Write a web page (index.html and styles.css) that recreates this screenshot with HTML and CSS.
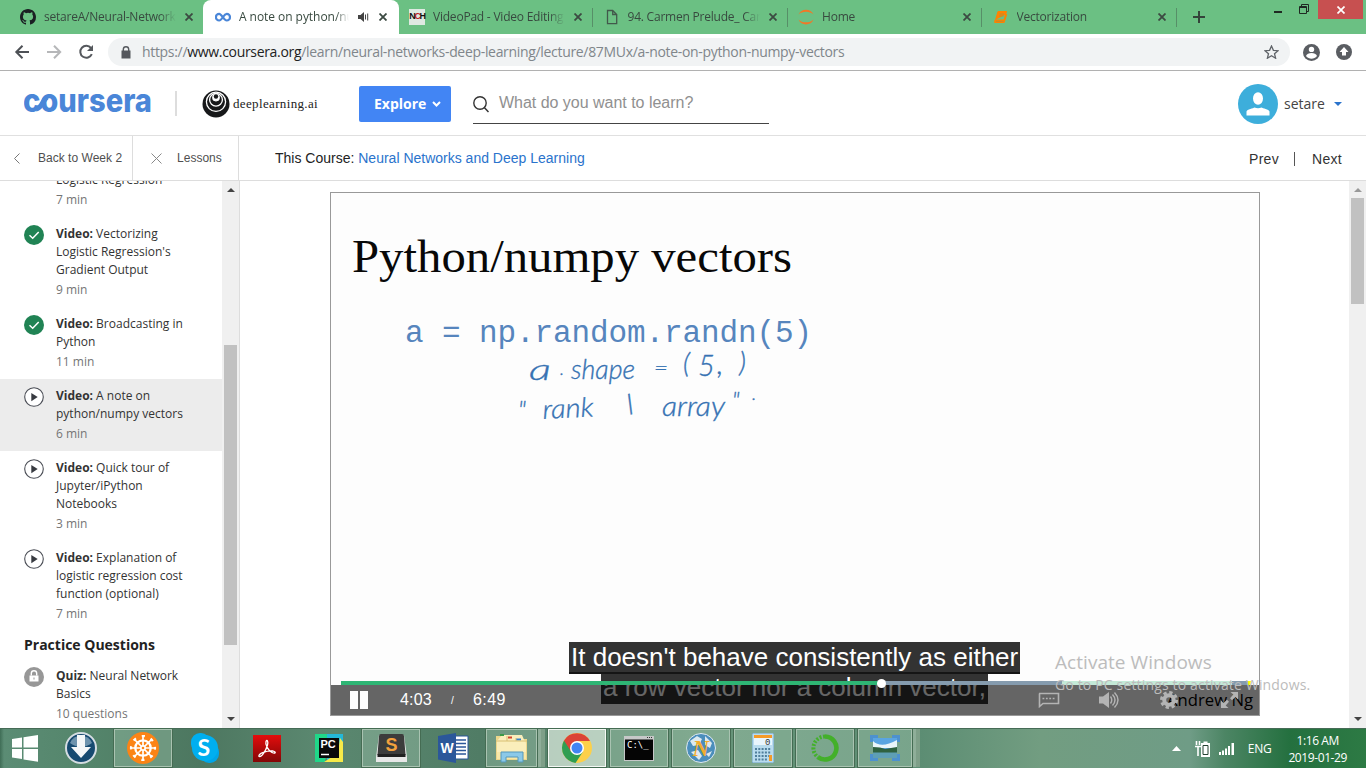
FILE: index.html
```html
<!DOCTYPE html>
<html lang="en">
<head>
<meta charset="utf-8">
<title>A note on python/numpy vectors</title>
<link rel="stylesheet" href="styles.css">
</head>
<body>
<svg width="0" height="0" class="defs">
  <symbol id="x" viewBox="0 0 8 8"><path d="M.5.5l7 7M7.500.5l-7 7" stroke="#3c4a42" stroke-width="1.8"/></symbol>
  <symbol id="play" viewBox="0 0 20 20"><circle cx="10" cy="10" r="9.300" fill="#fff" stroke="#4a4d55" stroke-width="1.1"/><path d="M7.300 6v8.200l6.400-4.100z" fill="#373a40"/></symbol>
  <symbol id="check" viewBox="0 0 20 20"><circle cx="10" cy="10" r="10" fill="#208354"/><path d="M5.500 10.300l3.200 3 6-6.300" fill="none" stroke="#fff" stroke-width="1.500"/></symbol>
</svg>
<header class="tabs">
  <div class="tab first"><svg class="fav" viewBox="0 0 16 16"><path fill="#1b1f23" d="M8 0C3.580 0 0 3.580 0 8c0 3.540 2.290 6.530 5.470 7.590.4.070.55-.17.55-.38v-1.490c-2.230.48-2.690-.95-2.690-.95-.36-.92-.89-1.170-.89-1.170-.73-.5.05-.49.05-.49.8.060 1.230.83 1.230.83.710 1.230 1.870.87 2.330.67.070-.52.28-.87.51-1.070-1.780-.2-3.650-.89-3.650-3.950 0-.87.310-1.590.82-2.150-.08-.2-.36-1.020.08-2.120 0 0 .67-.22 2.200.82a7.600 7.600 0 0 1 4 0c1.530-1.040 2.200-.82 2.200-.82.44 1.100.16 1.920.08 2.120.51.560.82 1.270.82 2.150 0 3.070-1.870 3.750-3.650 3.950.29.25.54.730.54 1.480v2.200c0 .21.150.46.550.38A8 8 0 0 0 16 8c0-4.420-3.580-8-8-8z"/></svg><span class="ttl">setareA/Neural-Networks</span><svg class="x"><use href="#x"/></svg></div>
  <div class="tab active"><svg class="fav" viewBox="0 0 16 16"><path d="M8 8C6.200 10.700 5.300 11.500 4.200 11.500a3.300 3.300 0 1 1 0-6.600c2.500 0 4.500 6.600 7.500 6.600a3.300 3.300 0 1 0 0-6.600C10.200 4.900 9.300 6 8 8" fill="none" stroke="#4a86d8" stroke-width="2.200"/></svg><span class="ttl">A note on python/numpy</span><svg class="spk" viewBox="0 0 11 10"><path d="M0 3h2.500L6 0v10L2.500 7H0z" fill="#444"/><path d="M7.500 2.500v5M9.700 1.500v7" stroke="#444"/></svg><svg class="x"><use href="#x"/></svg></div>
  <div class="tab"><span class="fav nch">N<em>C</em>H</span><span class="ttl">VideoPad - Video Editing</span><svg class="x"><use href="#x"/></svg></div>
  <div class="tab line"><svg class="fav" viewBox="0 0 16 16"><path d="M3.500 1.500h5.200l4 4v9.200H3.500zM8.700 1.500v4h4" fill="none" stroke="#42584b" stroke-width="1.300"/></svg><span class="ttl">94. Carmen Prelude_ Carmen</span><svg class="x"><use href="#x"/></svg></div>
  <div class="tab line"><svg class="fav" viewBox="0 0 16 16"><path d="M.5 5.500C3-1 13-1 15.500 5.500 12 1.700 4 1.700.5 5.500zM.5 10.500C3 17 13 17 15.500 10.500 12 14.300 4 14.300.5 10.500z" fill="#f37726"/></svg><span class="ttl">Home</span><svg class="x"><use href="#x"/></svg></div>
  <div class="tab line"><svg class="fav" viewBox="0 0 16 16"><path d="M5 2.500h8.500l-2.500 8.500H2.500zM2 11l-.3 2.500h9.500L13.800 5" fill="#ff8200" stroke="#ff8200" stroke-width="1"/><path d="M6.500 5h4.500M6 7h4.500M3 12.300h7.500" stroke="#a8913d" stroke-width=".8"/></svg><span class="ttl">Vectorization</span><svg class="x"><use href="#x"/></svg></div>
  <div class="newtab"><svg viewBox="0 0 12 12"><path d="M6 0v12M0 6h12" stroke="#34433a" stroke-width="2"/></svg></div>
  <div class="winbtns"><span class="min"></span><svg class="rest" viewBox="0 0 10 10"><path d="M2.500 2V.5h7v7H8M.5 2.500h7v7h-7zM.5 3.500h7" fill="none" stroke="#1f2922" stroke-width="1"/></svg><span class="close"><svg viewBox="0 0 8 8"><path d="M.5.5l7 7M7.500.5l-7 7" stroke="#fff" stroke-width="1.700"/></svg></span></div>
</header>
<div class="toolbar">
  <svg class="nav" width="80" height="16" viewBox="0 0 80 16"><path d="M15 8H2.500M8.500 1.700L2.300 8l6.200 6.300" fill="none" stroke="#4e5156" stroke-width="2"/><path d="M33 8h12.500M40 1.700L46.200 8 40 14.300" fill="none" stroke="#b6b7b9" stroke-width="2"/><path d="M77.800 10.200A6 6 0 1 1 77 4" fill="none" stroke="#55585d" stroke-width="2"/><path d="M79 1v6h-6z" fill="#55585d"/></svg>
  <div class="omni"><svg width="10" height="13" viewBox="0 0 10 13"><path d="M2.300 5V3.500a2.700 2.700 0 0 1 5.400 0V5" fill="none" stroke="#55585d" stroke-width="1.400"/><path d="M.5 4.500h9v8h-9z" fill="#55585d"/></svg><span class="url">https://<b>www.coursera.org</b>/learn/neural-networks-deep-learning/lecture/87MUx/a-note-on-python-numpy-vectors</span><svg class="star" width="15" height="14" viewBox="0 0 15 14"><path d="M7.500 1l1.900 4.300 4.600.4-3.500 3 1.100 4.500-4.100-2.400-4.100 2.400 1.100-4.500-3.500-3 4.600-.4z" fill="none" stroke="#5f6368" stroke-width="1.300"/></svg></div>
  <svg class="who" width="17" height="17" viewBox="0 0 17 17"><circle cx="8.500" cy="8.500" r="8.500" fill="#5a5d62"/><circle cx="8.500" cy="5.400" r="2.700" fill="#fff"/><path d="M3 12c1-4 10-4 11 0-3 3.500-8 3.500-11 0z" fill="#fff"/></svg>
  <svg class="upd" width="16" height="16" viewBox="0 0 16 16"><circle cx="8" cy="8" r="8" fill="#5a5d62"/><path d="M8 3l4.500 5H10v3.500H6V8H3.500z" fill="#fff"/></svg>
</div>
<div class="head">
  <svg class="logo" width="128" height="24" viewBox="0 0 128 24"><text x="-1" y="20" textLength="129" lengthAdjust="spacingAndGlyphs">coursera</text><path d="M12 17C18 16 18 9 23 5" fill="none" stroke="#4a86d8" stroke-width="5"/></svg>
  <span class="bar"></span>
  <svg class="dl" width="28" height="28" viewBox="0 0 28 28"><circle cx="14" cy="14" r="13.500" fill="#17181a"/><g fill="none" stroke="#fff" stroke-width="1.300"><circle cx="14" cy="11.800" r="9.600"/><circle cx="14" cy="9.800" r="6.400"/><circle cx="14" cy="7.600" r="3.200" fill="#fff"/></g><circle cx="14" cy="6.500" r="2.200" fill="#17181a"/></svg>
  <span class="dlt">deeplearning.ai</span>
  <span class="explore">Explore <svg width="9" height="6" viewBox="0 0 9 6"><path d="M1 1l3.500 3.500L8 1" fill="none" stroke="#fff" stroke-width="2"/></svg></span>
  <span class="search"><svg width="16" height="17" viewBox="0 0 16 17"><circle cx="7" cy="7" r="6.200" fill="none" stroke="#333" stroke-width="1.400"/><path d="M11.300 11.500l4.200 4.500" stroke="#333" stroke-width="1.500"/></svg><span>What do you want to learn?</span></span>
  <svg class="ava" width="40" height="40" viewBox="0 0 40 40"><circle cx="20" cy="20" r="20" fill="#3daedb"/><ellipse cx="20" cy="14.500" rx="5" ry="6.200" fill="#fff"/><path d="M8.500 31.500v-4c.5-2.300 7-3 8-4q3.500 1.500 7 0c1 1 7.500 1.700 8 4v4z" fill="#fff"/></svg>
  <span class="user">setare</span><svg class="caret" width="8" height="4" viewBox="0 0 8 4"><path d="M0 0h8L4 4z" fill="#2a73cc"/></svg>
</div>
<div class="sub">
  <span class="back"><svg width="6" height="11" viewBox="0 0 6 11"><path d="M5.500.5l-5 5 5 5" fill="none" stroke="#777"/></svg>Back to Week 2</span>
  <span class="less"><svg width="11" height="11" viewBox="0 0 11 11"><path d="M.5.5l10 10M10.500.5l-10 10" stroke="#888"/></svg>Lessons</span>
  <span class="crs">This Course: <a>Neural Networks and Deep Learning</a></span>
  <span class="pn"><span>Prev</span><i></i><span>Next</span></span>
</div>
<main class="body">
  <nav class="side">
    <div class="list">
      <div class="it"><svg class="ic"><use href="#check"/></svg><div><p><b>Video:</b> Vectorizing<br>Logistic Regression</p><small>7 min</small></div></div>
      <div class="it"><svg class="ic"><use href="#check"/></svg><div><p><b>Video:</b> Vectorizing<br>Logistic Regression's<br>Gradient Output</p><small>9 min</small></div></div>
      <div class="it"><svg class="ic"><use href="#check"/></svg><div><p><b>Video:</b> Broadcasting in<br>Python</p><small>11 min</small></div></div>
      <div class="it on"><svg class="ic"><use href="#play"/></svg><div><p><b>Video:</b> A note on<br>python/numpy vectors</p><small>6 min</small></div></div>
      <div class="it"><svg class="ic"><use href="#play"/></svg><div><p><b>Video:</b> Quick tour of<br>Jupyter/iPython<br>Notebooks</p><small>3 min</small></div></div>
      <div class="it"><svg class="ic"><use href="#play"/></svg><div><p><b>Video:</b> Explanation of<br>logistic regression cost<br>function (optional)</p><small>7 min</small></div></div>
      <h3>Practice Questions</h3>
      <div class="it"><svg class="ic" viewBox="0 0 20 20"><circle cx="10" cy="10" r="10" fill="#979797"/><path d="M5.500 8.500h9v6h-9z" fill="#fff"/><path d="M7.300 8.500V6.500a2.700 2.700 0 0 1 5.400 0v2" fill="none" stroke="#fff" stroke-width="1.400"/><path d="M9.500 10.500h1v2h-1z" fill="#979797"/></svg><div><p><b>Quiz:</b> Neural Network<br>Basics</p><small>10 questions</small></div></div>
    </div>
    <div class="sb"><i class="up"></i><i class="thumb"></i><i class="dn"></i></div>
  </nav>
  <section class="stage">
    <div class="player">
      <svg class="slide" width="928" height="522" viewBox="331 193 928 522">
        <text class="h" x="352" y="272" textLength="440" lengthAdjust="spacingAndGlyphs">Python/numpy vectors</text>
        <text class="code" x="405" y="342" textLength="407">a = np.random.randn(5)</text>
        <g class="hand">
          <text x="529" y="380" textLength="22" lengthAdjust="spacingAndGlyphs" font-size="30">a</text><text x="560" y="375" font-size="17">.</text>
          <text x="571" y="379" textLength="64" lengthAdjust="spacingAndGlyphs" font-size="27">shape</text>
          <text x="654" y="375" textLength="14" lengthAdjust="spacingAndGlyphs" font-size="22">=</text>
          <text x="683" y="373" font-size="28">(</text><text x="698" y="376" font-size="29">5</text><text x="717" y="374" font-size="30">,</text><text x="739" y="372" font-size="28">)</text>
          <text x="518" y="419" font-size="25">"</text>
          <text x="543" y="419" textLength="51" lengthAdjust="spacingAndGlyphs" font-size="27" transform="rotate(-3 543 419)">rank</text>
          <text x="627" y="414" font-size="28" transform="rotate(-14 631 404)">l</text>
          <text x="662" y="416" textLength="63" lengthAdjust="spacingAndGlyphs" font-size="28">array</text>
          <text x="732" y="409" font-size="24">"</text><text x="752" y="400" font-size="18">.</text>
        </g>
        <text class="ang" x="1167" y="706" textLength="86" lengthAdjust="spacingAndGlyphs">Andrew Ng</text>
      </svg>
      <div class="cap c1">It doesn't behave consistently as either</div>
      <div class="cap c2">a row vector nor a column vector,</div>
      <div class="ctl">
        <span class="pause"></span><span class="t1">4:03</span><span class="sl">/</span><span class="t2">6:49</span>
        <svg class="ct" width="22" height="16" viewBox="0 0 22 16"><path d="M1 1.500h19.500v10H5L1.500 14.500V1.500" fill="none" stroke="#b4b4b4" stroke-width="1.600"/><path d="M4.500 6.500h12.500" stroke="#b4b4b4" stroke-width="1.700" stroke-dasharray="1.800 1.600"/></svg>
        <svg class="ct" width="20" height="18" viewBox="0 0 20 18"><path d="M0 5.500h4L10 1v16l-6-4.500H0z" fill="#b4b4b4"/><path d="M11.500 5.500q2.500 3.500 0 7M13.500 3.500q5 5.500 0 11M15.500 1.500q7 7.500 0 15" fill="none" stroke="#b4b4b4" stroke-width="1.400"/></svg>
        <svg class="ct" width="18" height="18" viewBox="0 0 18 18"><circle cx="9" cy="9" r="4.800" fill="none" stroke="#b4b4b4" stroke-width="4"/><circle cx="9" cy="9" r="7.600" fill="none" stroke="#b4b4b4" stroke-width="2.800" stroke-dasharray="3.300 2.670"/></svg>
        <svg class="ct" width="19" height="18" viewBox="0 0 19 18"><path d="M10.500 1H18v7.500L15.500 6 12 9.300 10 7.300l3.300-3.700zM8.500 17H1V9.500L3.500 12 7 8.700l2 2L5.700 14.400z" fill="#b4b4b4"/></svg>
      </div>
      <div class="prog"><i class="p1"></i><i class="p2"></i><i class="p3"></i><i class="p4"></i><i class="p5"></i></div><span class="knob"></span>
    </div>
    <div class="wm"><div>Activate Windows</div><p>Go to PC settings to activate Windows.</p></div>
  </section>
  <div class="sb right"><i class="up"></i><i class="thumb"></i><i class="dn"></i></div>
</main>
<footer class="task">
  <div class="ap start"><svg width="28" height="27" viewBox="0 0 28 27"><path d="M1 4l10-1.500v10H1zM12.500 2.300L27 0v12.500H12.500zM1 14h10v10L1 22.500zM12.500 14H27v12.800l-14.500-2.200z" fill="#fff"/></svg></div>
  <div class="ap"><svg width="32" height="32" viewBox="0 0 32 32"><circle cx="16" cy="16" r="15" fill="#174a70" stroke="#d5dde2" stroke-width="2"/><path d="M5 11a12 12 0 0 1 22 0q-11 8-22 0" fill="#6e93ad"/><path d="M12 3h8v12h6L16 26 6 15h6z" fill="#f5f7f8"/></svg></div>
  <div class="ap btn"><svg width="32" height="32" viewBox="0 0 32 32"><circle cx="16" cy="16" r="16" fill="#fb8416"/><g stroke="#fff" fill="none"><circle cx="16" cy="16" r="7.700" stroke-width="2.300"/><path d="M16 4v24M4 16h24M7.500 7.500l17 17M24.500 7.500l-17 17" stroke-width="1.700"/><circle cx="16" cy="16" r="12" stroke-width="2.200" stroke-dasharray="3.200 6.220" stroke-dashoffset="1.600"/></g><circle cx="16" cy="16" r="3" fill="#fff"/><circle cx="16" cy="16" r="1.300" fill="#fb8416"/></svg></div>
  <div class="ap"><svg width="32" height="30" viewBox="0 0 32 30"><rect x="2" y="0" width="19" height="20" rx="9" fill="#00aff0"/><rect x="11" y="10" width="19" height="20" rx="9" fill="#00a5e8"/><circle cx="16" cy="15" r="13" fill="#00aff0"/><text x="8.500" y="23" class="sky">S</text></svg></div>
  <div class="ap"><svg width="28" height="27" viewBox="0 0 28 27"><defs><linearGradient id="rd" x2="0" y2="1"><stop stop-color="#e40d0d"/><stop offset="1" stop-color="#820606"/></linearGradient></defs><path d="M0 0h28v27H0z" fill="url(#rd)"/><path d="M6 21.500c-1-3 8-6 14-5.500 4 1.500 2 3-1 1.500-4-2-7-8-6-11 1-2.500 2.500 0 1.500 3.500C13 15 9 22.500 6 21.500z" fill="none" stroke="#fff" stroke-width="1.300"/></svg></div>
  <div class="ap"><svg width="28" height="28" viewBox="0 0 28 28"><path d="M0 0h14L10 28H0z" fill="#20d789"/><path d="M12 0h16v10L12 28z" fill="#24b8d8"/><path d="M28 8v20H9l14-9 2-15z" fill="#f6ea48"/><path d="M4 4h20v20H4z" fill="#0a0a0a"/><text x="5.500" y="14" class="pc">PC</text><path d="M6 20.500h8" stroke="#fff" stroke-width="1.500"/></svg></div>
  <div class="ap btn"><svg width="31" height="29" viewBox="0 0 31 29"><path d="M3 1h25l3 22v5H0v-5z" fill="#e8e8e8"/><path d="M5 0h21q2 0 2 2l1.500 19H1.500L3 2q0-2 2-2z" fill="#3c3c3c"/><path d="M1.500 20h28v3h-28z" fill="#202020"/><text x="9.500" y="17" class="sub3">S</text></svg></div>
  <div class="ap"><svg width="31" height="30" viewBox="0 0 31 30"><path d="M17 3h13v23H17z" fill="#fff" stroke="#2b579a"/><path d="M18 7h10M18 10.500h10M18 14h10M18 17.500h10M18 21h10" stroke="#2b579a" stroke-width="1.500"/><path d="M0 3l18-3v30L0 26.500z" fill="#2b579a"/><text x="2.500" y="19.500" class="wd">W</text></svg></div>
  <div class="ap btn stack"><svg width="32" height="31" viewBox="0 0 32 31"><path d="M0 3h11l1 3h19v21H0z" fill="#ecd78c"/><path d="M1 7h29v19H1z" fill="#f8e8a8"/><path d="M1 8l5-6h20l4 9v8H1z" fill="#faeebb"/><path d="M4 2h4" stroke="#3a9a46" stroke-width="2"/><path d="M12 4.500h4" stroke="#d2452d" stroke-width="2"/><path d="M20 6.500h5" stroke="#3a84c8" stroke-width="2"/><path d="M0 8h31M11 3v5M20 5v3" stroke="#d8bf72"/><path d="M5 29V19h22v10h-5v-5H10v5z" fill="#8bc9e8" stroke="#5598bc"/></svg></div>
  <div class="ap btn chr"><svg width="30" height="30" viewBox="0 0 30 30"><circle cx="15" cy="15" r="15" fill="#fcd04a"/><path d="M2 7.500A15 15 0 0 0 13.500 29.900l7.600-11.400L15 15z" fill="#2f9e52"/><path d="M2 7.500A15 15 0 0 1 28 8H15l-6 10.500z" fill="#db4437"/><circle cx="15" cy="15" r="7" fill="#fff"/><circle cx="15" cy="15" r="5.500" fill="#4285f4"/></svg></div>
  <div class="ap btn"><svg width="30" height="25" viewBox="0 0 30 25"><path d="M0 0h30v25H0z" fill="#c6c8c8"/><path d="M1 3.500h28V24H1z" fill="#050505"/><path d="M23 1.500h5" stroke="#333" stroke-dasharray="1 1"/><text x="3" y="12" class="cmd">C:\_</text></svg></div>
  <div class="ap btn"><svg width="30" height="30" viewBox="0 0 30 30"><circle cx="15" cy="15" r="14.500" fill="#4b8ebc" stroke="#dfe9ef"/><path d="M4 8l7-5 5 3-3 6-6 1zM19 3l7 7-2 5-5-3zM5 19l7-2 4 6-3 4zM20 21l6-3-3 6z" fill="#dce9ef"/><text x="6.500" y="23" class="nn">N</text></svg></div>
  <div class="ap btn"><svg width="22" height="30" viewBox="0 0 22 30"><rect width="22" height="30" rx="1.500" fill="#b9dcee" stroke="#6b9fc0"/><path d="M2 2h18v3H2z" fill="#f49b29"/><path d="M2 5h18v7H2z" fill="#e9f5fc"/><text x="13" y="12" class="cl">0</text><path d="M3 16h16M3 19.500h16M3 23h16M3 26.500h12" stroke="#507f9c" stroke-width="2" stroke-dasharray="2 1.300"/><path d="M17 22h3v6h-3z" fill="#f49b29"/></svg></div>
  <div class="ap btn"><svg width="28" height="28" viewBox="0 0 28 28"><path d="M14 2.500a11.500 11.500 0 1 1-7 20.700" fill="none" stroke="#43b02a" stroke-width="4.600"/><path d="M14 2.500A11.500 11.500 0 0 0 7 23.200" fill="none" stroke="#43b02a" stroke-width="4" stroke-dasharray="2 1.500"/></svg></div>
  <div class="ap btn stack two"><svg width="30" height="26" viewBox="0 0 30 26"><path d="M1.500 7V1.500H8M22 1.500h6.500V7M28.500 19v5.500H22M8 24.500H1.500V19" fill="none" stroke="#4d91ce" stroke-width="3"/><path d="M3 3h24v20H3z" fill="#5aa5e2"/><path d="M3 6q8 8 24-1v8H3z" fill="#eaf5fa"/><path d="M3 12q8 0 12 2l12-2v6H3z" fill="#2f6241"/><path d="M3 17.500h24V23H3z" fill="#5e9fb4"/></svg></div>
  <div class="tray"><svg width="9" height="5" viewBox="0 0 9 5"><path d="M0 5h9L4.500 0z" fill="#fff"/></svg>
    <svg class="bat" width="15" height="16" viewBox="0 0 15 16"><path d="M6 2h2.500V.5h4V2H15v14H6z" fill="#fff"/><path d="M8 4.500h5v9H8z" fill="none" stroke="#264232" stroke-width="1"/><path d="M1.500 0v4M4.500 0v4M0 5.500h6M3 5v10" stroke="#fff" stroke-width="1.600"/></svg>
    <svg class="sig" width="15" height="12" viewBox="0 0 15 12"><path d="M0 9h2v3H0zM3 7.500h2V12H3zM6 5.500h2V12H6zM9 3h2v9H9zM12.500 0h2.500v12h-2.500z" fill="#fff"/></svg>
    <span class="eng">ENG</span><span class="clk">1:16 AM<br>2019-01-29</span></div>
</footer>
</body>
</html>
```
FILE: styles.css
```css
* { box-sizing: border-box; }
body { margin: 0; width: 1366px; height: 768px; overflow: hidden; display: flex; flex-direction: column; background: #fff; font: 12px/18px "Open Sans", sans-serif; color: #333; }
svg { flex: none; display: block; }
.defs { position: absolute; }
p { margin: 0; }

/* browser tabs */
.tabs { height: 34px; flex: none; background: #6bc083; display: flex; padding-left: 8.500px; }
.tab { width: 194.500px; flex: none; display: flex; align-items: center; padding-left: 11.500px; }
.tab .fav { width: 16px; height: 16px; }
.tab .ttl { width: 132px; margin: 0 9px 0 8px; overflow: hidden; white-space: nowrap; color: #38493f; letter-spacing: -.22px; -webkit-mask: linear-gradient(90deg, #000 88%, transparent); mask: linear-gradient(90deg, #000 88%, transparent); }
.tab .x { width: 8px; height: 8px; }
.tab .spk { width: 11px; height: 10px; margin-right: 10px; }
.active { background: #fff; border-radius: 8px 8px 0 0; width: 196px; margin-right: -1.500px; padding-left: 12px; }
.active .ttl { width: 110px; letter-spacing: -.05px; }
.line { background: linear-gradient(#578f68, #578f68) 0 8px / 1px 19px no-repeat; }
.nch { background: #dfe9e2; color: #111; font: bold 9px/14px "Liberation Sans", sans-serif; letter-spacing: -1.400px; text-align: center; }
.nch em { font-style: normal; color: #c4161c; }
.newtab { width: 47px; padding: 11px 0 0 17px; background: linear-gradient(#578f68, #578f68) 0 8px / 1px 19px no-repeat; }
.newtab svg { width: 12px; height: 12px; }
.winbtns { margin-left: auto; display: flex; padding-right: 3px; }
.min { width: 8px; height: 2px; background: #1f2922; margin: 11px 17px 0 0; }
.rest { width: 10px; height: 10px; margin: 4px 9px 0 0; }
.close { width: 45px; height: 19px; background: #c75050; display: flex; justify-content: center; align-items: center; }
.close svg { width: 8px; height: 8px; }

/* address bar */
.toolbar { height: 37px; flex: none; display: flex; align-items: center; padding-left: 14px; border-bottom: 1px solid #b1b1b1; }
.omni { height: 28px; width: 1182px; margin-left: 14px; border-radius: 14px; background: #f1f3f4; display: flex; align-items: center; padding: 0 11px 0 13px; }
.url { font-size: 14px; margin-left: 11px; color: #80868b; white-space: nowrap; letter-spacing: -.32px; }
.url b { font-weight: 400; color: #222; }
.star { margin-left: auto; }
.who { margin-left: 13px; }
.upd { margin-left: 16px; }

/* site header */
.head { height: 65px; flex: none; display: flex; align-items: center; padding: 1px 0 0 24px; border-bottom: 1px solid #e0e0e0; }
.logo text { font: 800 32px Inter, sans-serif; fill: #4a86d8; }
.bar { width: 2px; height: 25px; background: #ddd; margin-left: 23px; }
.dl { margin-left: 25px; }
.dlt { font: 13px "Liberation Serif", serif; color: #222; margin: 1px 0 0 3px; width: 126px; letter-spacing: .35px; }
.explore { width: 92px; height: 36px; background: #4285f4; border-radius: 2px; color: #fff; font: bold 14px/36px "Open Sans", sans-serif; padding-left: 15px; display: flex; align-items: center; gap: 6px; }
.search { width: 296px; height: 40px; margin: 1px 0 0 22px; border-bottom: 1px solid #444; display: flex; gap: 10px; font: 16px "Liberation Sans", sans-serif; color: #909090; letter-spacing: -.02px; }
.search svg { margin-top: 12px; }
.search span { margin-top: 10px; }
.ava { margin-left: 469px; }
.user { font-size: 14px; margin: 0 9px 0 6px; color: #444; }

.sub { height: 45px; flex: none; display: flex; border-bottom: 1px solid #ddd; font-family: "Liberation Sans", sans-serif; }
.back, .less { display: flex; align-items: center; height: 44px; border-right: 1px solid #ddd; color: #4f4f4f; white-space: nowrap; letter-spacing: .02px; }
.back { width: 133px; padding-left: 14px; gap: 18px; }
.less { width: 106px; padding-left: 18px; gap: 15px; }
.crs { font-size: 14px; line-height: 44px; margin-left: 36px; color: #222; }
.crs a { color: #2a73cc; }
.pn { margin-left: auto; margin-right: 24px; display: flex; align-items: center; font-size: 14px; height: 45px; letter-spacing: .3px; }
.pn i { width: 1px; height: 14px; background: #555; margin: 0 17px 0 15px; }

/* lesson list */
.body { height: 547px; flex: none; display: flex; }
.side { width: 240px; display: flex; border-right: 1px solid #ddd; overflow: hidden; height: 547px; }
.list { width: 222px; margin-top: -36px; }
.it { display: flex; padding: 8px 0 8px 24px; }
.it > div { margin-left: 12px; white-space: nowrap; }
.it small { display: block; font-size: 12px; margin-top: 2px; color: #757575; }
.it b { font-weight: 700; }
.on { background: #ececec; }
.ic { width: 20px; height: 20px; }
h3 { margin: 0; padding-left: 24px; font: bold 14px/28px "Open Sans", sans-serif; color: #222; height: 28px; }
.sb { width: 17px; height: 547px; background: #f0f0f0; display: flex; flex-direction: column; align-items: center; flex: none; }
.up { border: 4px solid transparent; border-top: 0; border-bottom: 4px solid #444; margin-top: 7px; }
.dn { border: 4px solid transparent; border-bottom: 0; border-top: 4px solid #444; margin-top: auto; margin-bottom: 7px; }
.thumb { width: 13px; height: 300px; margin-top: 153px; background: #c1c1c1; }
.right .thumb { height: 106px; margin-top: 6px; }
.right .up { border-bottom-color: #999; }

.stage { flex: 1; position: relative; padding: 11px 0 0 90px; }
.player { position: relative; width: 930px; height: 524px; border: 1px solid #999; background: #fdfdfd; }
.h { font: 46px "Liberation Serif", serif; fill: #080808; }
.code { font: 31px "Liberation Mono", monospace; fill: #5685bd; }
.hand { font-family: Lato, sans-serif; font-style: italic; font-weight: 300; fill: #3672b3; stroke: #3672b3; stroke-width: .35px; }
.ang { font: 17px "Open Sans", sans-serif; fill: #000; }
.cap { position: absolute; background: #333; color: #fff; font: 26px/32px "Liberation Sans", sans-serif; white-space: nowrap; padding-left: 2px; }
.c1 { left: 238px; top: 449px; width: 451px; height: 32px; z-index: 1; border-bottom: 2px solid #151515; line-height: 31px; }
.c2 { left: 270px; top: 478px; width: 387px; height: 33px; }
.slide { position: absolute; left: 0; top: 0; }
.ctl { position: absolute; left: 0; right: 0; bottom: 0; height: 30px; background: rgba(0, 0, 0, .6); z-index: 1; display: flex; align-items: center; color: #fff; font: 16px "Liberation Sans", sans-serif; }
.pause { width: 18px; height: 18px; border: solid #fff; border-width: 0 8px; margin-left: 19px; }
.t1 { margin-left: 32px; width: 51px; letter-spacing: .2px; }
.sl { font-size: 10px; width: 22px; }
.t2 { width: 565px; letter-spacing: .4px; }
.ct:nth-of-type(2) { margin-left: 39px; }
.ct:nth-of-type(3) { margin-left: 41px; }
.ct:nth-of-type(4) { margin-left: 42px; }
.prog { position: absolute; left: 10px; top: 488px; height: 4px; display: flex; z-index: 3; }
.prog i { height: 4px; }
.p1 { width: 540px; background: #2eb574; }
.p2 { width: 181px; background: #859bae; }
.p3 { width: 170px; background: #c4ead8; }
.p4 { width: 16px; background: #859bae; }
.p5 { width: 3px; background: #ff0; }
.knob { position: absolute; left: 546px; top: 486px; width: 9px; height: 9px; border-radius: 5px; background: #fff; z-index: 3; }
.wm { position: absolute; left: 815px; top: 468px; z-index: 4; color: #bcbcbc; font-size: 19px; line-height: 26px; white-space: nowrap; letter-spacing: .05px; }
.wm p { font-size: 14px; line-height: 20px; letter-spacing: .16px; }

/* taskbar */
.task { height: 40px; flex: none; background: linear-gradient(90deg, #3f6d56 0, #5b8c74 4px, #54856b 90px, #4d7760 200px, #5b8870 320px, #507c65 480px, #68957a 700px, #5c8d73 920px, #729d81 1040px, #6f9c86 1190px, #4c8564 1225px, #24703f 1290px, #2d7a44 1366px); border-top: 1px solid #466b56; display: flex; }
.ap { width: 58px; height: 38px; margin: 0 2px; display: flex; align-items: center; justify-content: center; flex: none; border: 1px solid transparent; }
.start { width: 46px; }
.btn { border-color: #a9c3b1; background: rgba(185, 218, 194, .3); outline: 1px solid #456c53; outline-offset: 0; }
.chr { background: rgba(225, 238, 227, .7); border-color: #f4f8f4; }
.stack { width: 51px; margin-right: 9px; box-shadow: 4px 0 0 #8fae99, 8px 0 0 #7e9f88; }
.two { width: 54px; }
.sky { font: bold 23px Lato, sans-serif; fill: #fff; }
.pc { font: bold 11px "Liberation Sans", sans-serif; fill: #fff; }
.sub3 { font: bold 18px "Liberation Sans", sans-serif; fill: #f3a13d; }
.wd { font: bold 14px "Liberation Sans", sans-serif; fill: #fff; }
.cmd { font: 9px "DejaVu Sans Mono", monospace; fill: #fff; }
.nn { font: italic bold 23px "Liberation Serif", serif; fill: #f2ac2d; }
.cl { font: 9px "Liberation Mono", monospace; fill: #333; }
.tray { margin-left: auto; display: flex; align-items: center; color: #fff; padding-right: 19px; }
.bat { margin-left: 14px; }
.sig { margin-left: 9px; }
.eng { margin-left: 14px; letter-spacing: -.3px; }
.clk { line-height: 17px; text-align: center; margin-left: 17px; letter-spacing: -.4px; white-space: nowrap; }
```
